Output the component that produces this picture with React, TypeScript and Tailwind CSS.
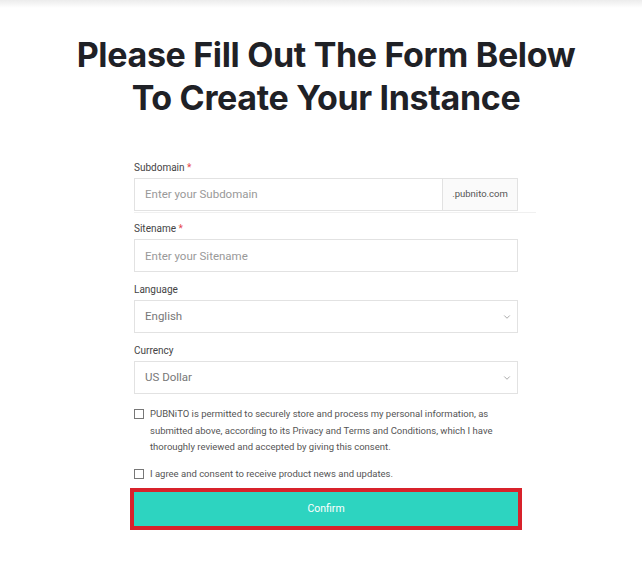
import { ChevronDown } from 'lucide-react';

function Label({ text, required }: { text: string; required?: boolean }) {
  return (
    <label className="block h-[14px] leading-[14px] text-[10px] text-[#444] mb-1 pt-[1px]">
      {text}
      {required && <span className="text-[#e5484d]"> *</span>}
    </label>
  );
}

function SelectBox({ value }: { value: string }) {
  return (
    <div className="flex items-center justify-between h-[33px] border border-[#e2e2e2] bg-white pl-[10px] pr-[5px]">
      <span className="text-[11.5px] text-[#777]">{value}</span>
      <ChevronDown className="w-[10px] h-[10px] text-[#999]" strokeWidth={2} />
    </div>
  );
}

export default function App() {
  return (
    <div className="min-h-screen bg-white" style={{ fontFamily: 'Roboto, "Liberation Sans", sans-serif' }}>
      {/* top shadow */}
      <div className="h-[8px] bg-gradient-to-b from-[#ececec] to-white"></div>

      <div className="w-[652px]">
        <h1 className="mt-[25px] text-center text-[34px] leading-[43px] font-bold text-[#1f2126] tracking-[-0.01em] font-['Inter',sans-serif]">
          Please Fill Out The Form Below
          <br />
          To Create Your Instance
        </h1>

        <form className="w-[384px] mx-auto mt-[41px] flex flex-col gap-[10px]" onSubmit={(e) => e.preventDefault()}>
          {/* Subdomain */}
          <div className="relative">
            <Label text="Subdomain" required />
            <div className="flex h-[33px] border border-[#e2e2e2]">
              <input
                className="flex-1 min-w-0 pl-[10px] text-[11.5px] outline-none placeholder:text-[#999]"
                placeholder="Enter your Subdomain"
              />
              <div className="w-[75px] flex items-center justify-center border-l border-[#e2e2e2] bg-[#fafafa] text-[9.5px] text-[#555]">
                .pubnito.com
              </div>
            </div>
            <div className="absolute left-0 -right-[18px] -bottom-[2px] h-px bg-[#f0f0f0]"></div>
          </div>

          {/* Sitename */}
          <div>
            <Label text="Sitename" required />
            <input
              className="block w-full h-[33px] border border-[#e2e2e2] pl-[10px] text-[11.5px] outline-none placeholder:text-[#999]"
              placeholder="Enter your Sitename"
            />
          </div>

          {/* Language */}
          <div>
            <Label text="Language" />
            <SelectBox value="English" />
          </div>

          {/* Currency */}
          <div>
            <Label text="Currency" />
            <SelectBox value="US Dollar" />
          </div>

          {/* Consents */}
          <div className="mt-[2px] flex items-start gap-[6px]">
            <div className="mt-[3px] w-[10px] h-[10px] border border-[#777] shrink-0"></div>
            <p className="text-[9.5px] leading-[16.5px] text-[#555]">
              PUBNiTO is permitted to securely store and process my personal information, as submitted above, according to its Privacy and Terms and Conditions, which I have thoroughly reviewed and accepted by giving this consent.
            </p>
          </div>
          <div className="flex items-start gap-[6px]">
            <div className="mt-[3px] w-[10px] h-[10px] border border-[#777] shrink-0"></div>
            <p className="text-[9.5px] leading-[16.5px] text-[#555]">
              I agree and consent to receive product news and updates.
            </p>
          </div>

          {/* Confirm */}
          <div className="-mt-[4px] -mx-[4px] border-[4px] border-[#d8222b]">
            <button
              type="submit"
              className="block w-full h-[34px] bg-[#2dd4c0] text-white text-[10.5px]"
            >
              Confirm
            </button>
          </div>
        </form>
      </div>
    </div>
  );
}
